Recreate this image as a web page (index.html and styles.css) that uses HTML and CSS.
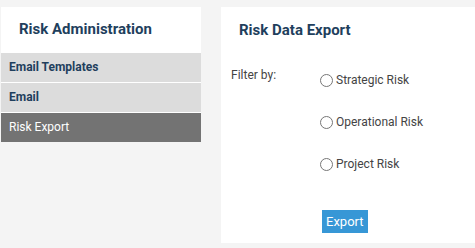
FILE: index.html
```html
<!DOCTYPE html>
<html lang="en">
<head>
  <meta charset="UTF-8">
  <title>Risk Administration</title>
  <link rel="stylesheet" href="styles.css">
</head>
<body>
  <div class="layout">
    <nav class="sidebar">
      <h2>Risk Administration</h2>
      <a class="nav-item" href="#">Email Templates</a>
      <a class="nav-item" href="#">Email</a>
      <a class="nav-item active" href="#">Risk Export</a>
    </nav>

    <main class="panel">
      <h2>Risk Data Export</h2>
      <div class="filter">
        <div class="filter-label">Filter by:</div>
        <div class="filter-options">
          <label class="option"><input type="radio" name="risk"> Strategic Risk</label>
          <label class="option"><input type="radio" name="risk"> Operational Risk</label>
          <label class="option"><input type="radio" name="risk"> Project Risk</label>
        </div>
      </div>
      <div class="actions">
        <button class="export-btn">Export</button>
      </div>
    </main>
  </div>
</body>
</html>
```

FILE: styles.css
```css
body {
  margin: 0;
  background: #f4f4f4;
  font-family: Roboto, "Liberation Sans", sans-serif;
  color: #444;
}
.layout {
  display: flex;
  gap: 20px;
  padding: 7px 0 0 1px;
}
.sidebar {
  width: 200px;
  display: flex;
  flex-direction: column;
  gap: 1px;
  background: #ffffff;
  align-self: flex-start;
}
.sidebar h2 {
  margin: 0;
  height: 45px;
  line-height: 45px;
  padding-left: 18px;
  font-size: 15px;
  font-weight: 700;
  color: #1f3f5d;
}
.nav-item {
  display: block;
  height: 29px;
  line-height: 29px;
  padding-left: 8px;
  background: #dcdcdc;
  color: #1f3f5d;
  font-size: 12px;
  font-weight: 700;
  text-decoration: none;
}
.nav-item.active {
  background: #737373;
  color: #ffffff;
  font-weight: 400;
}
.panel {
  flex: 1;
  height: 236px;
  background: #ffffff;
  padding: 0 10px;
}
.panel h2 {
  margin: 0;
  padding: 14px 0 0 8px;
  height: 32px;
  font-size: 15px;
  font-weight: 700;
  color: #1f3f5d;
}
.filter {
  display: flex;
  margin-top: 15px;
}
.filter-label {
  width: 89px;
  font-size: 12px;
  line-height: 14px;
}
.filter-options {
  display: flex;
  flex-direction: column;
  gap: 26px;
  padding-top: 4px;
}
.option {
  display: flex;
  align-items: center;
  gap: 3px;
  font-size: 12px;
  height: 16px;
}
.option input {
  margin: 0;
  width: 13px;
  height: 13px;
}
.actions {
  padding: 38px 0 0 91px;
}
.export-btn {
  background: #3797d6;
  color: #ffffff;
  border: none;
  border-radius: 0;
  font-family: inherit;
  font-size: 13px;
  height: 23px;
  padding: 0 4px;
}
```
